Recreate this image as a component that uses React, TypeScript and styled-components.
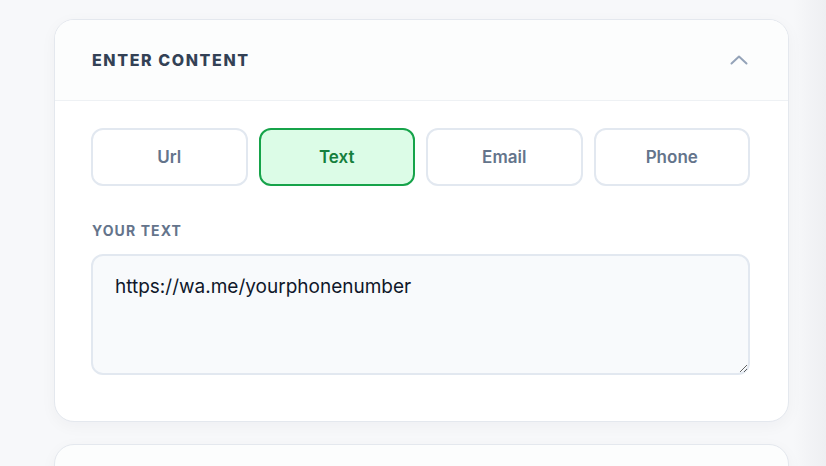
import React, { useState } from 'react';
import styled, { createGlobalStyle } from 'styled-components';

const GlobalStyle = createGlobalStyle`
  html, body {
    margin: 0;
    padding: 0;
  }

  body {
    font-family: Inter, "Noto Sans", sans-serif;
    background: linear-gradient(90deg, #f7f8fa 0, #f7f8fa 96%, #eeeff2 100%);
    min-height: 100vh;
  }
`;

const Page = styled.div`
  display: flex;
  flex-direction: column;
  gap: 22px;
  padding: 19px 0 0 54px;
`;

const Panel = styled.section`
  width: 735px;
  box-sizing: border-box;
  background: #ffffff;
  border: 1px solid #e4e8ee;
  border-radius: 20px;
  box-shadow: 0 4px 16px rgba(15, 23, 42, 0.04);
  overflow: hidden;
`;

const CollapsedPanel = styled(Panel)`
  height: 82px;
  background: #fcfdfd;
`;

const Header = styled.header`
  display: flex;
  align-items: center;
  justify-content: space-between;
  height: 80px;
  padding: 0 40px 0 37px;
  background: #fcfdfd;
  border-bottom: 1px solid #eef1f4;
  cursor: pointer;

  h2 {
    margin: 0;
    font-size: 16px;
    font-weight: 800;
    letter-spacing: 1.6px;
    color: #334155;
  }
`;

const Body = styled.div`
  padding: 27px 38px 46px 36px;
`;

const Tabs = styled.div`
  display: grid;
  grid-template-columns: repeat(4, 1fr);
  gap: 11px;
`;

const Tab = styled.button<{ $active: boolean }>`
  height: 58px;
  border-radius: 12px;
  border: 2px solid ${({ $active }) => ($active ? '#16a34a' : '#e2e8f0')};
  background: ${({ $active }) => ($active ? '#dcfce7' : '#ffffff')};
  color: ${({ $active }) => ($active ? '#15803d' : '#64748b')};
  font-family: Inter, sans-serif;
  font-size: 17px;
  font-weight: 600;
  cursor: pointer;
`;

const Label = styled.label`
  display: block;
  margin: 36px 0 15px 1px;
  font-size: 14px;
  font-weight: 700;
  letter-spacing: 1.1px;
  color: #64748b;
`;

const TextArea = styled.textarea`
  display: block;
  width: 100%;
  height: 121px;
  box-sizing: border-box;
  padding: 19px 22px;
  border: 2px solid #e2e8f0;
  border-radius: 12px;
  background: #f8fafc;
  font-family: Inter, sans-serif;
  font-size: 19px;
  color: #0f172a;
  outline: none;
`;

const Chevron = () => (
  <svg width="18" height="10" viewBox="0 0 18 10" fill="none">
    <polyline
      points="1.5,8.5 9,1.5 16.5,8.5"
      stroke="#94a3b8"
      strokeWidth="2"
      strokeLinecap="round"
      strokeLinejoin="round"
    />
  </svg>
);

const TABS = ['Url', 'Text', 'Email', 'Phone'];

function App() {
  const [active, setActive] = useState('Text');
  const [text, setText] = useState('https://wa.me/yourphonenumber');

  return (
    <>
      <GlobalStyle />
      <Page>
        <Panel>
          <Header>
            <h2>ENTER CONTENT</h2>
            <Chevron />
          </Header>
          <Body>
            <Tabs>
              {TABS.map(tab => (
                <Tab
                  key={tab}
                  $active={tab === active}
                  onClick={() => setActive(tab)}
                >
                  {tab}
                </Tab>
              ))}
            </Tabs>
            <Label htmlFor="content">YOUR TEXT</Label>
            <TextArea
              id="content"
              value={text}
              onChange={e => setText(e.target.value)}
            />
          </Body>
        </Panel>
        <CollapsedPanel />
      </Page>
    </>
  );
}

export default App;
